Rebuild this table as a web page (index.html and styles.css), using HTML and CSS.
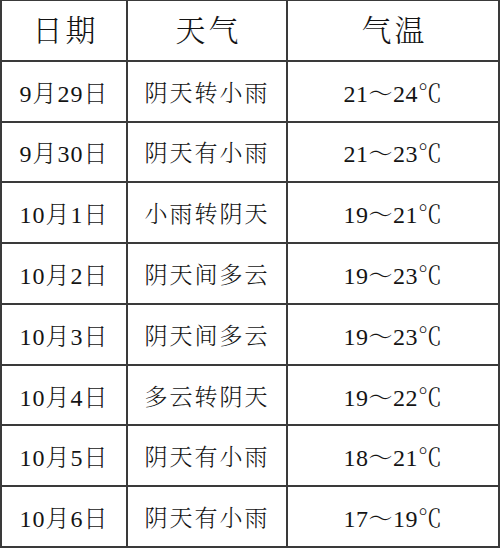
FILE: index.html
```html
<!DOCTYPE html>
<html lang="zh">
<head>
<meta charset="utf-8">
<title>天气预报</title>
<link rel="stylesheet" href="styles.css">
</head>
<body>
<div class="table">
  <div class="cell head">日期</div>
  <div class="cell head">天气</div>
  <div class="cell head">气温</div>

  <div class="cell date">9月29日</div>
  <div class="cell wx">阴天转小雨</div>
  <div class="cell temp">21～24℃</div>

  <div class="cell date">9月30日</div>
  <div class="cell wx">阴天有小雨</div>
  <div class="cell temp">21～23℃</div>

  <div class="cell date">10月1日</div>
  <div class="cell wx">小雨转阴天</div>
  <div class="cell temp">19～21℃</div>

  <div class="cell date">10月2日</div>
  <div class="cell wx">阴天间多云</div>
  <div class="cell temp">19～23℃</div>

  <div class="cell date">10月3日</div>
  <div class="cell wx">阴天间多云</div>
  <div class="cell temp">19～23℃</div>

  <div class="cell date">10月4日</div>
  <div class="cell wx">多云转阴天</div>
  <div class="cell temp">19～22℃</div>

  <div class="cell date">10月5日</div>
  <div class="cell wx">阴天有小雨</div>
  <div class="cell temp">18～21℃</div>

  <div class="cell date">10月6日</div>
  <div class="cell wx">阴天有小雨</div>
  <div class="cell temp">17～19℃</div>
</div>
</body>
</html>
```

FILE: styles.css
```css
html, body {
  margin: 0;
  padding: 0;
  background: #ffffff;
}

.table {
  display: grid;
  grid-template-columns: 126px 160px 212px;
  grid-template-rows: repeat(9, 1fr);
  width: 500px;
  height: 548px;
  box-sizing: border-box;
  border-top: 1px solid #3a3a3a;
  border-left: 2px solid #3a3a3a;
  font-family: "Liberation Serif", "Noto Serif CJK SC", "Noto Sans CJK SC", serif;
  color: #141414;
}

.cell {
  display: flex;
  align-items: center;
  justify-content: center;
  border-right: 2px solid #3a3a3a;
  border-bottom: 2px solid #3a3a3a;
  font-size: 23px;
  font-weight: 300;
  white-space: nowrap;
}

.head {
  font-size: 30px;
  font-weight: 300;
  letter-spacing: 3px;
  padding-bottom: 4px;
  padding-left: 3px;
}

.date {
  font-size: 24px;
  letter-spacing: 1px;
}

.wx {
  letter-spacing: 2px;
}

.temp {
  font-size: 24px;
  letter-spacing: 0.5px;
}
```
